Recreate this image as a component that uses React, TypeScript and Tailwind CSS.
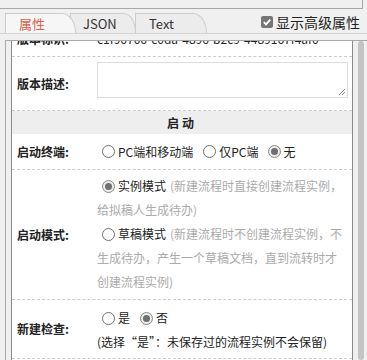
import React from "react";

const Radio = ({ checked }: { checked?: boolean }) =>
  checked ? (
    <span className="inline-flex items-center justify-center w-[13px] h-[13px] rounded-full border border-[#8a8a8a] bg-[#ececec] ml-[5px] mr-[3px] shrink-0">
      <span className="w-[7px] h-[7px] rounded-full bg-[#6f6f6f]" />
    </span>
  ) : (
    <span className="inline-flex w-[13px] h-[13px] rounded-full border border-[#707070] bg-white ml-[5px] mr-[3px] shrink-0" />
  );

export default function App() {
  return (
    <div className="w-[367px] h-[360px] overflow-hidden bg-[#f0f0f0] text-[12px] text-[#222] font-['Noto_Sans_CJK_SC','Microsoft_YaHei',sans-serif] leading-none">
      {/* top strip */}
      <div className="w-[363px] h-[9px] border-b border-r border-[#a8a8a8]" />
      {/* tab bar */}
      <div className="h-[25px] flex items-end border-b border-[#d4d4d4] pl-[5px] pr-[7px]">
        <div className="relative z-30 w-[71px] h-[20px] bg-[#f6f6f6] border-l border-t border-r border-[#cccccc] rounded-tr-[14px_20px] pl-[13px] flex items-center text-[13px] text-[#d9604f]">
          属性
        </div>
        <div className="relative z-20 -ml-[6px] w-[66px] h-[20px] bg-[#ececec] border-l border-t border-r border-[#cccccc] rounded-tr-[12px_20px] pl-[12px] flex items-center text-[13px] text-[#333]">
          JSON
        </div>
        <div className="relative z-10 -ml-[1px] w-[72px] h-[20px] bg-[#ececec] border-l border-t border-r border-[#cccccc] rounded-tr-[14px_20px] pl-[13px] flex items-center text-[13px] text-[#333]">
          Text
        </div>
        <div className="ml-auto self-start mt-[6px] flex items-center">
          <span className="w-[12px] h-[12px] rounded-[2px] bg-[#767676] flex items-center justify-center mr-[3px]">
            <svg width="10" height="10" viewBox="0 0 10 10">
              <path d="M1.8 5.2 L4 7.4 L8.3 2.6" stroke="white" strokeWidth="1.8" fill="none" />
            </svg>
          </span>
          <span className="text-[14px] text-[#222]">显示高级属性</span>
        </div>
      </div>
      {/* panel */}
      <div className="mt-[6px] ml-[5px] h-[320px] border-l border-t border-[#a8a8a8] flex">
        <div className="w-[5px]" />
        <div className="w-[342px] h-full overflow-hidden bg-white border-l border-r border-[#8a8a8a]">
          {/* row 1 (scrolled, partially hidden) */}
          <div className="-mt-[20px] h-[36px] flex border-b border-dashed border-[#cccccc]">
            <div className="w-[85px] pl-[5px] flex items-center font-bold">版本标识:</div>
            <div className="flex-1 flex items-center whitespace-nowrap">c1f96706-c0da-4896-b2c9-4489167f4af0</div>
          </div>
          {/* row 2 */}
          <div className="h-[54px] flex border-b border-dashed border-[#cccccc]">
            <div className="w-[85px] pl-[5px] flex items-center font-bold">版本描述:</div>
            <div className="flex-1 pt-[5px]">
              <div className="relative w-[251px] h-[36px] border border-[#dddddd] bg-white">
                <svg className="absolute right-[1px] bottom-[1px]" width="8" height="8" viewBox="0 0 8 8">
                  <path d="M7 1 L1 7 M7 4 L4 7" stroke="#888" strokeWidth="1" />
                </svg>
              </div>
            </div>
          </div>
          {/* header */}
          <div className="h-[23px] bg-[#eeeeee] flex items-center justify-center font-bold tracking-[3px]">启动</div>
          {/* row 3 */}
          <div className="h-[36px] flex border-b border-dashed border-[#cccccc]">
            <div className="w-[85px] pl-[5px] flex items-center font-bold">启动终端:</div>
            <div className="flex-1 flex items-center whitespace-nowrap">
              <Radio />
              <span>PC端和移动端</span>
              <span className="w-[5px]" />
              <Radio />
              <span>仅PC端</span>
              <span className="w-[4px]" />
              <Radio checked />
              <span>无</span>
            </div>
          </div>
          {/* row 4 */}
          <div className="h-[130px] flex border-b border-dashed border-[#cccccc]">
            <div className="w-[85px] pl-[5px] flex items-center font-bold">启动模式:</div>
            <div className="flex-1 pt-[4px] whitespace-nowrap">
              <div className="h-[24px] flex items-center">
                <Radio checked />
                <span>实例模式</span>
                <span className="ml-[4px] text-[#aaaaaa]">(新建流程时直接创建流程实例，</span>
              </div>
              <div className="h-[24px] flex items-center text-[#aaaaaa]">给拟稿人生成待办)</div>
              <div className="h-[24px] flex items-center">
                <Radio />
                <span>草稿模式</span>
                <span className="ml-[4px] text-[#aaaaaa]">(新建流程时不创建流程实例，不</span>
              </div>
              <div className="h-[24px] flex items-center text-[#aaaaaa]">生成待办，产生一个草稿文档，直到流转时才</div>
              <div className="h-[24px] flex items-center text-[#aaaaaa]">创建流程实例)</div>
            </div>
          </div>
          {/* row 5 */}
          <div className="h-[59px] flex border-b border-dashed border-[#cccccc]">
            <div className="w-[85px] pl-[5px] flex items-center font-bold">新建检查:</div>
            <div className="flex-1 pt-[6px] whitespace-nowrap">
              <div className="h-[24px] flex items-center">
                <Radio />
                <span>是</span>
                <span className="w-[5px]" />
                <Radio checked />
                <span>否</span>
              </div>
              <div className="h-[24px] flex items-center">(选择“是”：未保存过的流程实例不会保留)</div>
            </div>
          </div>
        </div>
        <div className="w-[5px]" />
        <div className="w-[6px] h-full bg-[#c4c4c4] rounded-[3px]" />
      </div>
    </div>
  );
}
